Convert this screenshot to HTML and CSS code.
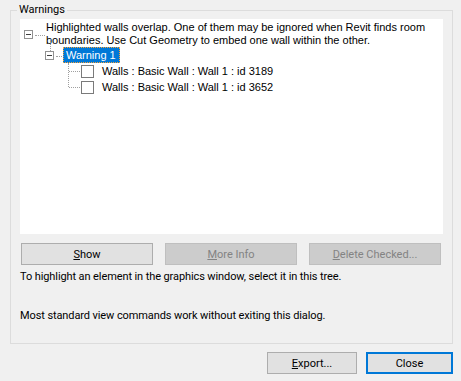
FILE: index.html
```html
<!DOCTYPE html>
<html lang="en">
<head>
    <meta charset="UTF-8">
    <meta name="viewport" content="width=device-width, initial-scale=1.0">
    <title>Review Warnings</title>
    <link rel="stylesheet" href="styles.css">
</head>
<body>
    <div class="dialog">
        <fieldset class="group">
            <legend>Warnings</legend>
            <div class="tree">
                <div class="node root">
                    <span class="toggle"></span>
                    <span class="label multi">Highlighted walls overlap. One of them may be ignored when Revit finds room boundaries. Use Cut Geometry to embed one wall within the other.</span>
                </div>
                <div class="node warning">
                    <span class="toggle"></span>
                    <span class="label selected">Warning 1</span>
                </div>
                <div class="children">
                    <div class="node item">
                        <span class="check"></span>
                        <span class="label">Walls : Basic Wall : Wall 1 : id 3189</span>
                    </div>
                    <div class="node item">
                        <span class="check"></span>
                        <span class="label">Walls : Basic Wall : Wall 1 : id 3652</span>
                    </div>
                </div>
            </div>

            <div class="actions">
                <button type="button" class="btn"><u>S</u>how</button>
                <button type="button" class="btn" disabled><u>M</u>ore Info</button>
                <button type="button" class="btn" disabled><u>D</u>elete Checked...</button>
            </div>
            <p class="hint">To highlight an element in the graphics window, select it in this tree.</p>
            <p class="hint last">Most standard view commands work without exiting this dialog.</p>
        </fieldset>

        <div class="footer">
            <button type="button" class="btn export"><u>E</u>xport...</button>
            <button type="button" class="btn close">Close</button>
        </div>
    </div>
</body>
</html>
```

FILE: styles.css
```css
body {
    margin: 0;
    background-color: #f0f0f0;
    font-family: Roboto, "Noto Sans", sans-serif;
    font-size: 11px;
    color: #000;
}

.dialog {
    width: 443px;
    padding: 2px 0 0 10px;
}

/* Caja de grupo "Warnings" */
.group {
    margin: 0;
    padding: 1px 9px 19px 9px;
    border: 1px solid #dcdcdc;
}

.group legend {
    margin-left: -3px;
    padding: 0 2px;
    line-height: 16px;
}

/* Arbol de advertencias */
.tree {
    height: 215px;
    background-color: #fff;
    font-family: "Liberation Sans", Arial, sans-serif;
    font-size: 11px;
}

.node {
    position: relative;
    display: flex;
    align-items: center;
}

.root {
    padding: 2px 0 0 4px;
    gap: 13px;
}

.root .toggle::after {
    content: "";
    position: absolute;
    left: 10px;
    top: 4px;
    width: 10px;
    border-top: 1px dotted #a0a0a0;
}

.multi {
    width: 390px;
    line-height: 13px;
}

.warning {
    height: 16px;
    padding-left: 25px;
    gap: 9px;
}

.warning .toggle::before {
    content: "";
    position: absolute;
    left: 4px;
    top: -13px;
    height: 12px;
    border-left: 1px dotted #a0a0a0;
}

.warning .toggle::after {
    content: "";
    position: absolute;
    left: 10px;
    top: 4px;
    width: 8px;
    border-top: 1px dotted #a0a0a0;
}

.toggle {
    position: relative;
    flex: none;
    width: 7px;
    height: 7px;
    border: 1px solid #919191;
    background: linear-gradient(#404040, #404040) center / 5px 1px no-repeat, #fff;
}

.selected {
    background-color: #0078d7;
    color: #fff;
    line-height: 14px;
    padding: 0 3px 0 2px;
    border: 1px dotted #f7a23a;
}

.children {
    position: relative;
}

.children::before {
    content: "";
    position: absolute;
    left: 48px;
    top: 0;
    height: 24px;
    border-left: 1px dotted #a0a0a0;
}

.item {
    height: 16px;
    padding-left: 61px;
    gap: 8px;
}

.item::before {
    content: "";
    position: absolute;
    left: 49px;
    top: 8px;
    width: 11px;
    border-top: 1px dotted #a0a0a0;
}

.check {
    flex: none;
    width: 11px;
    height: 11px;
    border: 1px solid #7a7a7a;
    background-color: #fff;
}

/* Botones */
.actions {
    display: flex;
    gap: 12px;
    margin: 9px 0 0 1px;
}

.btn {
    width: 132px;
    height: 22px;
    padding: 0;
    font-family: inherit;
    font-size: 11px;
    color: #000;
    background-color: #e1e1e1;
    border: 1px solid #adadad;
}

.btn:disabled {
    color: #838383;
    background-color: #cccccc;
    border-color: #bfbfbf;
}

.hint {
    margin: 4px 0 0 0;
    line-height: 16px;
    letter-spacing: -0.1px;
}

.hint.last {
    margin-top: 23px;
}

.footer {
    display: flex;
    justify-content: flex-end;
    gap: 9px;
    margin-top: 8px;
}

.export {
    width: 90px;
}

.close {
    width: 87px;
    border: 2px solid #0078d7;
}
```
